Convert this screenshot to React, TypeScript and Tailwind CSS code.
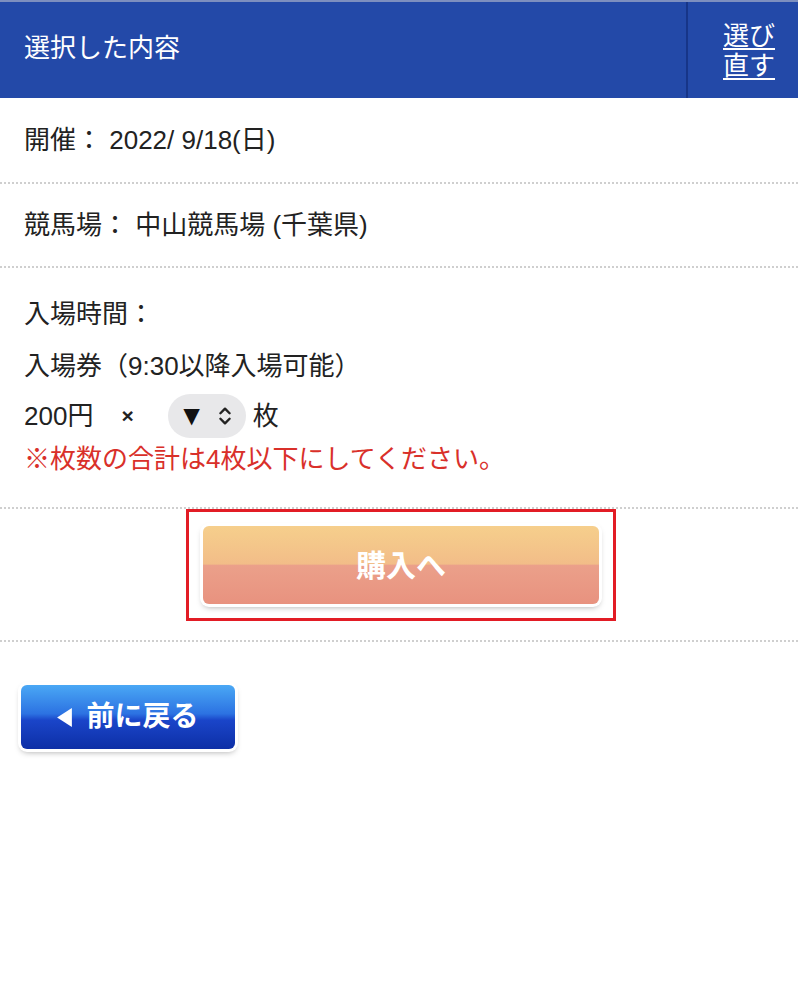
import { ChevronsUpDown } from "lucide-react";

const font = {
  fontFamily: '"Liberation Sans", "Noto Sans CJK JP", sans-serif',
};

function Divider() {
  return <div className="border-t-2 border-dotted border-[#cfcfcf]" />;
}

export default function App() {
  return (
    <div className="min-h-[1000px] w-[798px] bg-white text-[#222]" style={font}>
      {/* header */}
      <div className="flex h-[98px] border-t-2 border-[#7d8fbf] bg-[#2349a8] text-white">
        <div className="flex flex-1 items-center pb-[4px] pl-6 text-[26px]">選択した内容</div>
        <div className="w-[2px] bg-[#173588]" />
        <div className="flex w-[110px] flex-col justify-center pl-[35px] pt-[2px] text-[26px] leading-[30px]">
          <span className="underline underline-offset-[3px]">選び</span>
          <span className="underline underline-offset-[3px]">直す</span>
        </div>
      </div>

      <div className="flex h-[84px] items-center pl-6 text-[26px]">開催： 2022/ 9/18(日)</div>
      <Divider />
      <div className="flex h-[82px] items-center pl-6 text-[26px]">競馬場： 中山競馬場 (千葉県)</div>
      <Divider />

      <div className="flex flex-col pl-6 pt-[27px] pb-[30px] text-[26px]">
        <div className="h-[38px] leading-[38px]">入場時間：</div>
        <div className="mt-[14px] h-[38px] leading-[38px]">入場券（9:30以降入場可能）</div>
        <div className="mt-[8px] flex h-[46px] items-center">
          <span>200円</span>
          <span className="ml-[28px] text-[21px] font-bold">×</span>
          <div className="ml-[34px] flex h-[44px] w-[78px] items-center justify-center gap-[8px] rounded-full bg-[#e8e8ea]">
            <span className="text-[28px] leading-none text-[#111]">▼</span>
            <ChevronsUpDown size={22} strokeWidth={2.6} className="text-[#222]" />
          </div>
          <span className="ml-[7px]">枚</span>
        </div>
        <div className="mt-[2px] h-[36px] leading-[36px] text-[#d9302a]">※枚数の合計は4枚以下にしてください。</div>
      </div>
      <Divider />

      <div className="flex h-[131px] justify-center">
        <div className="ml-[4px] mb-[20px] box-border flex h-[112px] w-[430px] items-center justify-center border-[3px] border-[#e21c25]">
          <button className="h-[78px] w-[396px] rounded-[6px] bg-[linear-gradient(to_bottom,#f6cf8c_0%,#f2bd88_49%,#eba08a_50%,#e8927f_100%)] text-[30px] font-bold text-white shadow-[0_3px_6px_rgba(0,0,0,0.35)] ring-[3px] ring-white">
            購入へ
          </button>
        </div>
      </div>
      <Divider />

      <div className="pl-[21px] pt-[43px]">
        <button className="flex h-[64px] w-[214px] items-center justify-center gap-[14px] rounded-[6px] bg-[linear-gradient(to_bottom,#4aa8f5_0%,#2c72e2_45%,#1a45c9_55%,#0d2fa6_100%)] text-[28px] font-bold text-white shadow-[0_3px_6px_rgba(0,0,0,0.35)] ring-[3px] ring-white">
          <svg width="15" height="19" viewBox="0 0 14 18">
            <polygon points="14,0 14,18 0,9" fill="white" />
          </svg>
          前に戻る
        </button>
      </div>
    </div>
  );
}
